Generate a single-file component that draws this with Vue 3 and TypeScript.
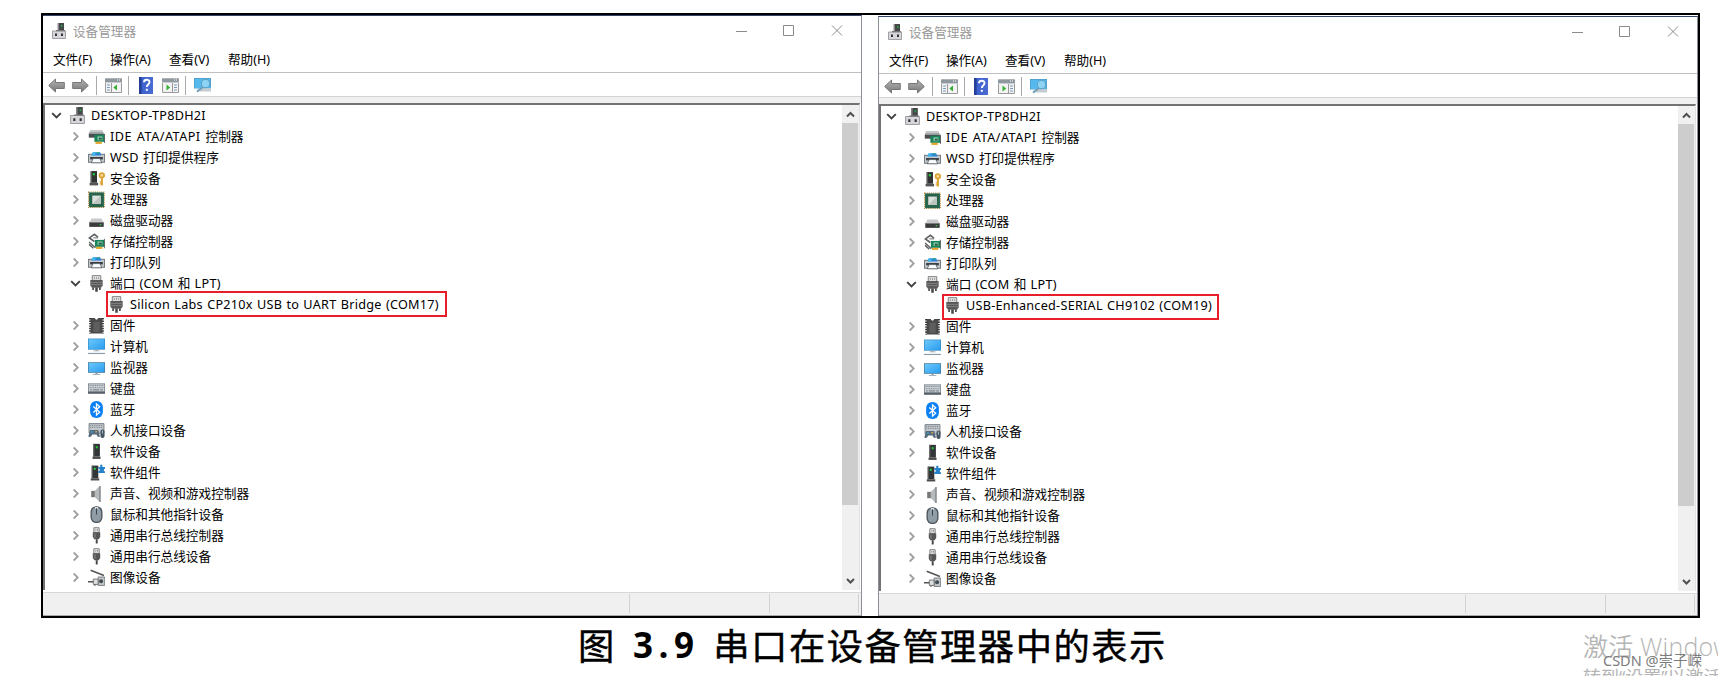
<script setup lang="ts">
interface TreeItem {
  icon: string
  text: string
  level: number
  open?: boolean
  leaf?: boolean
  fit?: string
}

interface ManagerWindow {
  id: string
  port: string
}

const windows: ManagerWindow[] = [
  { id: 'first', port: 'Silicon Labs CP210x USB to UART Bridge (COM17)' },
  { id: 'second', port: 'USB-Enhanced-SERIAL CH9102 (COM19)' },
]

const menus: string[] = ['文件(F)', '操作(A)', '查看(V)', '帮助(H)']

// Splits a label into Latin and Han runs so each can be spaced on its own.
function runs(text: string): string[] {
  return text.match(/[\x20-\x7e]+|[^\x20-\x7e]+/g) ?? []
}

function isLatin(run: string): boolean {
  return /^[\x20-\x7e]/.test(run)
}

function itemsFor(w: ManagerWindow): TreeItem[] {
  return [
    { icon: 'root', text: 'DESKTOP-TP8DH2I', level: 0, open: true },
    { icon: 'ide', text: 'IDE ATA/ATAPI 控制器', level: 1, fit: 'ide' },
    { icon: 'printer', text: 'WSD 打印提供程序', level: 1 },
    { icon: 'security', text: '安全设备', level: 1 },
    { icon: 'cpu', text: '处理器', level: 1 },
    { icon: 'disk', text: '磁盘驱动器', level: 1 },
    { icon: 'storage', text: '存储控制器', level: 1 },
    { icon: 'printer', text: '打印队列', level: 1 },
    { icon: 'port', text: '端口 (COM 和 LPT)', level: 1, open: true },
    { icon: 'port', text: w.port, level: 2, leaf: true },
    { icon: 'firmware', text: '固件', level: 1 },
    { icon: 'computer', text: '计算机', level: 1 },
    { icon: 'monitor', text: '监视器', level: 1 },
    { icon: 'keyboard', text: '键盘', level: 1 },
    { icon: 'bluetooth', text: '蓝牙', level: 1 },
    { icon: 'hid', text: '人机接口设备', level: 1 },
    { icon: 'software', text: '软件设备', level: 1 },
    { icon: 'component', text: '软件组件', level: 1 },
    { icon: 'sound', text: '声音、视频和游戏控制器', level: 1 },
    { icon: 'mouse', text: '鼠标和其他指针设备', level: 1 },
    { icon: 'usb', text: '通用串行总线控制器', level: 1 },
    { icon: 'usb', text: '通用串行总线设备', level: 1 },
    { icon: 'imaging', text: '图像设备', level: 1 },
  ]
}
</script>

<template>
  <main class="page">
    <svg class="defs" width="0" height="0" aria-hidden="true">
      <defs>
        <linearGradient id="gArrow" x1="0" y1="0" x2="0" y2="1"><stop offset="0" stop-color="#b4b4b4" /><stop offset="1" stop-color="#777" /></linearGradient>
        <linearGradient id="gScreen" x1="0" y1="0" x2="1" y2="1"><stop offset="0" stop-color="#6cc8fa" /><stop offset="1" stop-color="#2a9df0" /></linearGradient>
        <linearGradient id="gHelp" x1="0" y1="0" x2="1" y2="0"><stop offset="0" stop-color="#243f9e" /><stop offset=".25" stop-color="#3f63cf" /><stop offset="1" stop-color="#4a6bd0" /></linearGradient>

        <symbol id="i-root" viewBox="0 0 16 16">
          <path d="M6.800 0H13v7.500H6.800z" fill="#45484b" /><path d="M6.800 0H8v7.500H6.800z" fill="#8a8a8a" /><path d="M10 2h1.400v2H10z" fill="#21a83a" />
          <path d="M1.500 8h13v7.500h-13z" fill="#d6d6db" stroke="#97979d" stroke-width=".9" /><path d="M4 10.500h2v2.600H4zM10 10.500h2v2.600h-2z" fill="#333" />
          <path d="M5 7h9v1.200H5z" fill="#777" />
        </symbol>
        <symbol id="i-ide" viewBox="0 0 16 16">
          <path d="M2.200 2h11l1.800 3v4H.8V5z" fill="#a5a8aa" /><path d="M.8 5.500h14V9H.8z" fill="#4b4e51" /><path d="M2.500 2h10.400l1 1.800H1.600z" fill="#c7caca" />
          <path d="M6 6.300h9.500V13H6z" fill="#188258" /><path d="M9 8h4.500v3.500H9z" fill="#a6d8bd" /><path d="M10 9h3v2h-3z" fill="#236146" /><path d="M15.200 5.500h.8V14h-.8z" fill="#555" /><path d="M7 13h6v2H7z" fill="#e4a72c" />
        </symbol>
        <symbol id="i-printer" viewBox="0 0 16 16">
          <path d="M0 4.500h16V13H0z" fill="#777c81" /><path d="M1 5.500h14V12H1z" fill="#c9cdd0" /><path d="M2 7.500h12v2.300H2z" fill="#3b4046" />
          <path d="M4.600 3h6.800l1.400 3.200H3.200z" fill="#2d84e0" /><path d="M4.600 3H7v3.200H3.200z" fill="#40b9e9" /><path d="M8.500 3h2.300v1.300H8.500z" fill="#25ac72" />
          <path d="M4.800 9h6.400l1.800 4H3z" fill="#fbfcfd" stroke="#555b62" stroke-width=".8" />
        </symbol>
        <symbol id="i-security" viewBox="0 0 16 16">
          <path d="M2.500 1h6v11h-6z" fill="#303234" /><path d="M2.500 1h1v11h-1z" fill="#6c6c6c" /><path d="M4.500 3h2v2h-2z" fill="#21d13a" /><path d="M1.500 12h8v2.500h-8z" fill="#555" />
          <circle cx="13" cy="5" r="2.100" fill="#f4dfa6" stroke="#dca537" stroke-width="1.800" /><path d="M12.100 7h2v7.500h-2zM11 10.500h1.500v1.200H11zM11 12.500h1.500v1.200H11z" fill="#dca537" />
        </symbol>
        <symbol id="i-cpu" viewBox="0 0 16 16">
          <path d="M.5 1h15v14.500H.5z" fill="none" stroke="#b48a3c" stroke-width="1" stroke-dasharray="1 1" /><path d="M1 1.300h14v13.900H1z" fill="#28634c" /><path d="M4 4.300h8v7.900H4z" fill="#dce1dc" /><path d="M4 12.200 12 4.300v7.900z" fill="#bec5c0" />
        </symbol>
        <symbol id="i-disk" viewBox="0 0 16 16">
          <path d="M3.200 6h9.600l1.800 4H1.400z" fill="#c7c9cb" /><path d="M1.200 9.500h13.600V14H1.200z" fill="#393b3d" /><path d="M1.200 9.500h13.600v.8H1.200z" fill="#858585" /><path d="M11 11.300h1.500v1.200H11z" fill="#35ce45" />
        </symbol>
        <symbol id="i-storage" viewBox="0 0 16 16">
          <path d="M9.500 4 6 1.200 1.300 4.600 6 8" fill="none" stroke="#5d6063" stroke-width="1.500" /><path d="M5 4.600h4.500" stroke="#777" /><path d="m1 8.500 6 5.300M1 10.700l4 3.600" stroke="#5d6063" stroke-width="1.300" />
          <path d="M6.500 6.500h9V13h-9z" fill="#188258" /><path d="M9 8h4.500v3.200H9z" fill="#9fd3b7" /><path d="M10 9h3v2h-3z" fill="#245f47" /><path d="M15 5.500h.8v8.800H15z" fill="#555" /><path d="M7.500 13h6v2h-6z" fill="#e4a72c" />
        </symbol>
        <symbol id="i-port" viewBox="0 0 16 16">
          <path d="M4 .6h8v4.500H4z" fill="#e4e4e4" stroke="#7c7c7c" stroke-width=".9" /><path d="M5.500 2.300h1v1h-1zM7.500 2.300h1v1h-1zM9.500 2.300h1v1h-1z" fill="#666" />
          <path d="M2.200 4.700h11.600v5L12.300 12H3.700L2.200 9.700z" fill="#5a5a5a" /><path d="M2.500 7h11M2.500 9h11" stroke="#8c8c8c" stroke-width=".7" /><path d="M4 11.800h1.600v2.200H4zM6.800 11.800h2.400v4H6.800zM10.400 11.800H12v2.200h-1.600z" fill="#484848" />
        </symbol>
        <symbol id="i-firmware" viewBox="0 0 16 16">
          <path d="M2.500 1h3.800q1.700 3 3.400 0h3.800v14.500h-11z" fill="#4a4a4a" /><path d="M2 1v14.500M14 1v14.500" stroke="#303030" stroke-width="1.800" stroke-dasharray="1.300 1" /><path d="M5 4.500h6V14H5z" fill="#5e5e5e" />
        </symbol>
        <symbol id="i-computer" viewBox="0 0 16 16">
          <path d="M0 .5h16V11H0z" fill="#378fcc" /><path d="M.7 1.200h14.600v9.100H.7z" fill="url(#gScreen)" /><path d="M7 11h2v1H7zM5 11.700h6v.8H5z" fill="#9aa8b3" /><path d="M0 14h16v1.100H0z" fill="#8b9ba7" />
        </symbol>
        <symbol id="i-monitor" viewBox="0 0 16 16">
          <path d="M0 3h16v10H0z" fill="#477f9f" /><path d="M.7 3.700h14.600v8.600H.7z" fill="url(#gScreen)" /><path d="M7 13h2v1H7zM4.500 14h7v.8h-7z" fill="#8d9ba6" />
        </symbol>
        <symbol id="i-keyboard" viewBox="0 0 16 16">
          <path d="M0 3.200h16v9.500H0z" fill="#77828b" /><path d="M.7 4h14.600v6.500H.7z" fill="#cbd1d5" /><path d="M1.500 5.200h13M1.500 7.200h13" stroke="#7e8890" stroke-width=".9" stroke-dasharray="1 .7" /><path d="M2 9.300h1.500m1 0h6m1 0H14" stroke="#7e8890" /><path d="M0 11.500h16v1.300H0z" fill="#50585f" />
        </symbol>
        <symbol id="i-bluetooth" viewBox="0 0 16 16">
          <rect x="2" y="0" width="12" height="16" rx="5.600" fill="#0b80f5" /><path d="m5 5.200 6 5.400-3 2.700V2.700l3 2.700-6 5.400" fill="none" stroke="#fff" stroke-width="1.200" />
        </symbol>
        <symbol id="i-hid" viewBox="0 0 16 16">
          <path d="M1 1.500h14v9H1z" fill="#c3c8cc" stroke="#6c757d" stroke-width=".8" /><path d="M2 3.200h12M2 5h12" stroke="#76818a" stroke-width=".9" stroke-dasharray="1 .7" />
          <path d="M2 7.500h7.700l1.500 6.200q-1.900 1.600-3.200-1.900H4q-1.500 3.500-3.700 1.900z" fill="#566b7b" /><path d="M3 8.800h1.300v1.300H3z" fill="#35a8ea" /><path d="M7 8.500h1.400v1.400H7z" fill="#e3b343" /><rect x="11.700" y="7" width="3.900" height="8" rx="1.900" fill="#475562" /><path d="M13.600 8v3" stroke="#bdd" stroke-width=".7" />
        </symbol>
        <symbol id="i-software" viewBox="0 0 16 16">
          <path d="M5 .8h6.200v12H5z" fill="#333638" /><path d="M5 .8h1v12H5z" fill="#666" /><path d="M7.400 3h1.700v2H7.400z" fill="#21d13a" /><path d="M4.300 12.800h7.500V15H4.300z" fill="#4b4b4b" />
        </symbol>
        <symbol id="i-component" viewBox="0 0 16 16">
          <path d="M3.500 1.500h6.200v12H3.500z" fill="#333638" /><path d="M3.500 1.500h1v12h-1z" fill="#666" /><path d="M5.500 3.500h1.800v2H5.500z" fill="#21d13a" /><path d="M2.600 13.500h8v2h-8z" fill="#4b4b4b" />
          <path d="M9.700 2.800h1.800V.8h2v2H16v2h-1v2h1V8.500H9.700V6.500h1.200v-2H9.700z" fill="#2783c9" />
        </symbol>
        <symbol id="i-sound" viewBox="0 0 16 16">
          <path d="M3 5.500h3.500v6H3z" fill="#777" /><path d="M6.500 5.500 11 1v15l-4.500-4.500z" fill="#b7babd" /><path d="M10.500 1H12v15h-1.500z" fill="#858a8f" />
        </symbol>
        <symbol id="i-mouse" viewBox="0 0 16 16">
          <rect x="3" y=".8" width="10" height="14.600" rx="4.700" fill="#8f9ba5" stroke="#4e565d" stroke-width="1.300" /><path d="M8 1v6.500" stroke="#dfe5ea" stroke-width="3" /><rect x="7.100" y="2" width="1.800" height="6" rx=".9" fill="#38434b" />
        </symbol>
        <symbol id="i-usb" viewBox="0 0 16 16">
          <path d="M5.500.7h5V5h-5z" fill="#eee" stroke="#777" stroke-width=".9" /><path d="M7 2h.8v1.200H7zM8.600 2h.8v1.200h-.8z" fill="#555" /><path d="M4.500 5h7v4.500L10 11.600H6L4.500 9.500z" fill="#565656" /><path d="M6 6h1v4H6z" fill="#888" /><path d="M7.300 11.500h1.800v4H7.300z" fill="#444" />
        </symbol>
        <symbol id="i-imaging" viewBox="0 0 16 16">
          <path d="m2.500 1.200 12.500 5" stroke="#555" stroke-width="1.500" /><path d="M9.500 7.500h6.200v8H9.500z" fill="#c2c5c7" stroke="#71777c" stroke-width=".8" /><circle cx="12.300" cy="11.500" r="1.900" fill="#424b51" /><path d="M5 9.500h4.500v5H5z" fill="#dde0e2" stroke="#666" stroke-width=".8" /><path d="M0 12h5M6.500 14.500v1.300" stroke="#555" stroke-width="1.300" />
        </symbol>
        <symbol id="i-panel-left" viewBox="0 0 17 16">
          <path d="M.5 2h16v13.500H.5z" fill="#f3f3f3" stroke="#9a9a9a" /><path d="M0 1.500h17v3.500H0z" fill="#8f989f" /><path d="M12 2.500h1v1h-1zM14 2.500h1v1h-1z" fill="#fff" /><path d="M0 5.500h17" stroke="#c9cdd1" /><path d="M6.500 6v9.500" stroke="#999" /><path d="M2 8h3M2 10.500h3M2 13h3" stroke="#7b9cc0" stroke-width="1.200" /><path d="M12 7.500v6L8.300 10.500z" fill="#35b035" />
        </symbol>
        <symbol id="i-panel-right" viewBox="0 0 17 16">
          <path d="M.5 2h16v13.500H.5z" fill="#f3f3f3" stroke="#9a9a9a" /><path d="M0 1.500h17v3.500H0z" fill="#8f989f" /><path d="M12 2.500h1v1h-1zM14 2.500h1v1h-1z" fill="#fff" /><path d="M0 5.500h17" stroke="#c9cdd1" /><path d="M10.500 6v9.500" stroke="#999" /><path d="M12 8h3M12 10.500h3M12 13h3" stroke="#7b9cc0" stroke-width="1.200" /><path d="M4.500 7.500v6l3.700-3z" fill="#35b035" />
        </symbol>
        <symbol id="i-help" viewBox="0 0 14 17">
          <path d="M0 0h14v17H0z" fill="url(#gHelp)" /><path d="M0 0h2.500v17H0z" fill="#253f96" /><path d="M5 5.200C5 2 10.500 2 10.500 5.100c0 2.500-2.700 2.200-2.700 5" fill="none" stroke="#fff" stroke-width="1.900" /><path d="M6.800 11.800h2v2h-2z" fill="#fff" />
        </symbol>
        <symbol id="i-scan" viewBox="0 0 17 16">
          <path d="M0 1h17v10.500H0z" fill="#4f9fc7" /><path d="M.8 1.800h15.400V11H.8z" fill="#56b9ed" /><path d="M6 11.500h11v3H6z" fill="#c5cbcf" /><path d="M9 10 3 14.600" stroke="#6f9fbd" stroke-width="2" /><circle cx="11.500" cy="6.600" r="4.100" fill="#9bdaf5" fill-opacity=".8" stroke="#5b9ec2" stroke-width="1" />
        </symbol>
      </defs>
    </svg>

    <section class="frame">
      <article v-for="w in windows" :key="w.id" class="window" :class="w.id">
        <header class="titlebar">
          <svg class="app-icon"><use href="#i-root" /></svg>
          <span class="title">设备管理器</span>
          <svg class="controls" viewBox="0 0 107 12">
            <path d="M0 6.500h11M47.500 .5h10v10h-10zM96 .5l10 10M106 .5l-10 10" fill="none" stroke="#8b8b8b" />
          </svg>
        </header>
        <nav class="menu"><span v-for="m in menus" :key="m">{{ m }}</span></nav>
        <div class="toolbar">
          <svg class="arrow" viewBox="0 0 17 15"><path d="M.7 7.500 7.500 1v3.500h8.800v6H7.500V14z" fill="url(#gArrow)" stroke="#777" /></svg>
          <svg class="arrow next" viewBox="0 0 17 15"><path d="M16.300 7.500 9.500 1v3.500H.7v6h8.800V14z" fill="url(#gArrow)" stroke="#777" /></svg>
          <i class="sep a"></i>
          <svg class="tool"><use href="#i-panel-left" /></svg>
          <i class="sep b"></i>
          <svg class="help"><use href="#i-help" /></svg>
          <svg class="tool right"><use href="#i-panel-right" /></svg>
          <i class="sep c"></i>
          <svg class="tool"><use href="#i-scan" /></svg>
        </div>
        <div class="strip"></div>
        <div class="client">
          <div class="tree">
            <div v-for="(item, n) in itemsFor(w)" :key="n" class="row" :class="['level' + item.level, { leaf: item.leaf }]">
              <svg v-if="!item.leaf" class="chevron" viewBox="0 0 11 11">
                <path v-if="item.open" d="m1.200 3.200 4.300 4.300 4.300-4.300" fill="none" stroke="#404040" stroke-width="1.900" />
                <path v-else d="m3.700 1.500 4 4-4 4" fill="none" stroke="#a0a0a0" stroke-width="1.800" />
              </svg>
              <svg class="icon"><use :href="'#i-' + item.icon" /></svg>
              <span class="label" :class="item.fit"><span v-for="(run, i) in runs(item.text)" :key="i" :class="{ latin: isLatin(run) }">{{ run }}</span></span>
            </div>
          </div>
          <div class="scrollbar">
            <svg viewBox="0 0 17 18"><path d="m5 11.500 3.500-3.500 3.500 3.500" /></svg>
            <div class="thumb"></div>
            <svg class="down" viewBox="0 0 17 18"><path d="m5 7 3.500 3.500L12 7" /></svg>
          </div>
        </div>
        <footer class="status"><i class="wide"></i><i class="mid"></i><i class="end"></i></footer>
      </article>
    </section>

    <div class="caption">
      <span class="han">图</span><span class="num"><b>3</b><b>.</b><b>9</b></span><span class="han">串口在设备管理器中的表示</span>
    </div>

    <div class="activate">
      <div class="big">激活 Windows</div>
      <div class="small">转到“设置”以激活 Windows</div>
    </div>
    <div class="credit">CSDN @崇子嵘</div>
  </main>
</template>

<style>
html, body { overflow: hidden; background: #fff; }
</style>

<style scoped>
.page { position: relative; width: 1718px; height: 676px; overflow: hidden; background: #fff; box-sizing: border-box; padding: 13px 0 0 41px; font-family: "Noto Sans", "Noto Sans CJK SC", sans-serif; }
.defs { position: absolute; }
.frame { box-sizing: border-box; width: 1659px; height: 605px; border: 2px solid #000; display: flex; justify-content: space-between; }
.window { box-sizing: border-box; display: flex; flex-direction: column; height: 601px; border-top: 1px solid #34456c; border-right: 1px solid #8c8f98; width: 819px; background: #fff; }
.second { width: 820px; border-left: 1px solid #8c8f98; margin-top: 1px; height: 600px; }
.titlebar { height: 30px; flex: none; display: flex; align-items: center; padding-left: 8px; box-sizing: border-box; }
.app-icon { width: 16px; height: 16px; }
.title { margin-left: 6px; font-size: 12.6px; line-height: 20px; color: #999; flex: 1; padding-top: 1px; }
.controls { width: 107px; height: 12px; margin-right: 18px; }
.menu { flex: none; border-bottom: 1px solid #bfc0c4; display: flex; gap: 17px; padding: 1px 0 0 10px; height: 25px; font-size: 12.6px; line-height: 25px; color: #000; }
.menu span { width: 42px; white-space: nowrap; }
.menu span:first-child { width: 40px; }
.toolbar { flex: none; border-bottom: 1px solid #d2d2d2; display: flex; align-items: center; padding: 1px 0 0 5px; box-sizing: border-box; height: 24px; }
.toolbar svg { flex: none; }
.arrow { width: 17px; height: 15px; }
.next { margin-left: 7px; }
.sep { width: 1px; height: 19px; background: #aaa; }
.a { margin: 0 8px 0 7px; }
.b { margin: 0 10px 0 6px; }
.c { margin: 0 8px 0 6px; }
.tool { width: 17px; height: 16px; }
.help { width: 14px; height: 17px; }
.right { margin-left: 9px; }
.second .help { margin-left: -1px; }
.second .right { margin-left: 10px; }
.strip { height: 6px; flex: none; background: #f0f0f0; }
.client { flex: none; height: 485px; display: flex; border-top: 2px solid #737373; border-left: 2px solid #737373; border-right: 1px solid #e2e2e2; margin-right: 1px; }
.tree { flex: 1; overflow: hidden; }
.row { height: 21px; display: flex; align-items: center; padding-left: 6px; white-space: nowrap; }
.second .row.level0 { padding-left: 5px; }
.level1 { padding-left: 25px; }
.leaf { box-sizing: border-box; position: relative; }
.level2 { padding-left: 63px; }
.leaf::before { content: ""; position: absolute; left: 61px; top: -3px; width: 341px; height: 26px; border: 2px solid #e81e29; box-sizing: border-box; }
.second .leaf::before { width: 277px; top: -1px; }
.chevron { width: 11px; height: 11px; flex: none; }
.icon { width: 17px; height: 17px; flex: none; margin-left: 7px; }
.level2 .icon { margin-left: 0; }
.label { margin-left: 5px; font-size: 12.65px; line-height: 21px; color: #000; white-space: pre; }
.latin { letter-spacing: .26px; word-spacing: .7px; }
.ide .latin { letter-spacing: .48px; word-spacing: 1.100px; }
.scrollbar { width: 17px; background: #f0f0f0; display: flex; flex-direction: column; }
.scrollbar svg { width: 17px; height: 18px; fill: none; stroke: #505050; stroke-width: 2; }
.thumb { height: 382px; background: #cdcdcd; width: 16px; }
.scrollbar .down { margin-top: auto; }
.status { flex: 1; margin-top: 2px; border-top: 1px solid #d7d7d7; background: #f0f0f0; display: flex; padding-bottom: 2px; border-bottom: 1px solid #aaa; }
.status i { border-right: 1px solid #d2d2d2; margin-top: 1px; box-sizing: border-box; }
.wide { width: 587px; }
.mid { width: 140px; }
.end { width: 89px; }
.caption { display: flex; align-items: center; height: 56px; margin: -2px 0 0 537px; color: #000; font-size: 36.300px; line-height: 56px; white-space: nowrap; }
.han { font-family: "Noto Sans CJK SC", sans-serif; letter-spacing: 1.500px; -webkit-text-stroke: .4px #000; }
.num { display: flex; margin: 2px 19px 0 17px; font-family: "Open Sans", sans-serif; font-size: 35px; }
.num b { width: 20.500px; text-align: center; }
.activate { position: absolute; left: 1583px; top: 628px; width: 135px; white-space: nowrap; color: #b5b5b5; overflow: hidden; font-family: "Open Sans", "Noto Sans CJK SC", sans-serif; }
.big { font-size: 25px; line-height: 36px; font-weight: 350; letter-spacing: .2px; }
.small { font-size: 18px; line-height: 24px; padding-top: 1px; }
.credit { position: absolute; left: 1603px; top: 650px; font-size: 14.500px; line-height: 20px; color: #7c7c7c; white-space: nowrap; }
</style>
